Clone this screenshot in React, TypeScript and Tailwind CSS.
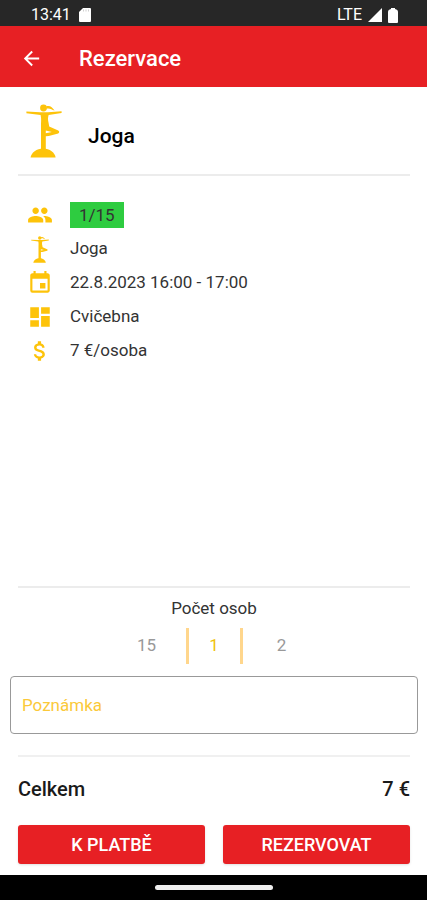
import { useState } from "react";
import type { ReactNode } from "react";
import {
  MdArrowBack,
  MdAttachMoney,
  MdDashboard,
  MdEvent,
  MdPeople,
} from "react-icons/md";

interface DetailItem {
  icon: ReactNode;
  text: string;
  highlighted?: boolean;
}

function YogaIcon({ className }: { className: string }) {
  return (
    <svg viewBox="0 0 36 54" className={className} fill="#fdc30a" aria-hidden="true">
      <circle cx="17.5" cy="4" r="3.4" />
      <path d="M20 2.4c4-1.600 6 .8 8.600 4.200-3-.8-4.600-2.600-8.200-1.800z" />
      <path d="M.4 7.400 14 8.200h8l13.600-1v1.800L22.600 11c-.8 2.600-.8 5 0 8l.6 3.400 9 4.200c1.400.8 1.300 2.300 0 3l-9.400 2.300-3 .3V46h-4.800V22c-.1-4 .6-6.500-.4-11L.4 9.200zM19.800 26.500v2.700l6-1.200z" />
      <path d="M4.600 53.600c.4-5 6.200-9.200 12.600-9.200s12 4.200 12.400 9.200z" />
    </svg>
  );
}

function SdCardIcon() {
  return (
    <svg viewBox="0 0 12 14" className="w-3 h-3.5" fill="#fff" aria-hidden="true">
      <path d="M4 0h7q1 0 1 1v12q0 1-1 1H1q-1 0-1-1V4z" />
      <path d="M4.500 1.500v2M7 1.500v2M9.500 1.500v2" stroke="#bbb" strokeWidth="0.7" />
    </svg>
  );
}

function StatusBar() {
  return (
    <div className="flex items-center justify-between h-[26px] pt-1 pl-[31px] pr-[29px] bg-[#272727] text-white text-base leading-5">
      <div className="flex items-center gap-2">
        <span>13:41</span>
        <SdCardIcon />
      </div>
      <div className="flex items-center gap-1.5">
        <span>LTE</span>
        <svg viewBox="0 0 14 14" className="w-3.5 h-3.5" fill="#fff" aria-hidden="true">
          <path d="M14 0v14H0z" />
        </svg>
        <svg viewBox="0 0 10 15" className="w-2.5 h-[15px]" fill="#fff" aria-hidden="true">
          <path d="M3 0h4v1q3 .5 3 3v10q0 1-1 1H1q-1 0-1-1V4q0-2.500 3-3z" />
        </svg>
      </div>
    </div>
  );
}

const details: DetailItem[] = [
  { icon: <MdPeople className="w-[26px] h-[26px]" />, text: "1/15", highlighted: true },
  { icon: <YogaIcon className="w-[18px] h-[27px]" />, text: "Joga" },
  { icon: <MdEvent className="w-[26px] h-[26px]" />, text: "22.8.2023 16:00 - 17:00" },
  { icon: <MdDashboard className="w-[26px] h-[26px]" />, text: "Cvičebna" },
  { icon: <MdAttachMoney className="w-[26px] h-[26px]" />, text: "7 €/osoba" },
];

const MAX_PERSONS = 15;
const PRICE = 7;

export default function App() {
  const [persons, setPersons] = useState<number>(1);
  const [note, setNote] = useState<string>("");

  // The picker wraps around at both ends
  const previous = persons === 1 ? MAX_PERSONS : persons - 1;
  const next = persons === MAX_PERSONS ? 1 : persons + 1;

  return (
    <div className="flex flex-col min-h-screen bg-white text-[#333] font-[Roboto,sans-serif]">
      <StatusBar />
      <header className="flex items-center h-[61px] px-5 pt-1 gap-9 bg-[#e72024] text-white">
        <button type="button" aria-label="Zpět">
          <MdArrowBack className="w-[23px] h-[23px]" />
        </button>
        <h1 className="text-[22px] leading-7 font-medium">Rezervace</h1>
      </header>

      <main className="flex flex-col grow">
        <div className="flex items-center gap-[26px] h-[89px] ml-[18px] mr-[17px] px-2 border-b-2 border-[#ececec]">
          <YogaIcon className="w-9 h-[54px]" />
          <h2 className="pt-2.5 text-[21px] leading-7 font-medium text-black">Joga</h2>
        </div>

        <ul className="px-[26px] pt-[22px] text-[17px]">
          {details.map((item) => (
            <li key={item.text} className="flex items-center gap-[17px] h-[34px]">
              <span className="flex justify-center w-[27px] text-[#fdc30a]">{item.icon}</span>
              {item.highlighted ? (
                <span className="px-[9px] bg-[#2ecc40] leading-[26px]">{item.text}</span>
              ) : (
                <span>{item.text}</span>
              )}
            </li>
          ))}
        </ul>

        <section className="flex flex-col items-center mt-auto ml-[18px] mr-[17px] pt-2 border-t-2 border-[#ececec] text-[17px]">
          <h3 className="leading-6">Počet osob</h3>
          <div className="flex items-center h-9 mt-2 text-[#999]">
            <button type="button" className="w-[78px] h-full" onClick={() => setPersons(previous)}>
              {previous}
            </button>
            <output className="flex items-center justify-center w-[57px] h-full border-x-3 border-[#ffd68c] text-[#f0c20c]">
              {persons}
            </output>
            <button type="button" className="w-[78px] h-full" onClick={() => setPersons(next)}>
              {next}
            </button>
          </div>
        </section>

        <div className="flex ml-2.5 mr-[9px] mt-3">
          <input
            type="text"
            aria-label="Poznámka"
            placeholder="Poznámka"
            value={note}
            onChange={(e) => setNote(e.target.value)}
            className="w-full h-[58px] px-[11px] border border-[#999] rounded text-[17px] placeholder-[#fbc93a]"
          />
        </div>

        <div className="flex justify-between ml-[18px] mr-[17px] mt-[21px] pt-[18px] border-t-2 border-[#f0f0f0] text-xl leading-7 font-medium text-[#1a1a1a]">
          <span>Celkem</span>
          <span>{persons * PRICE} €</span>
        </div>

        <div className="grid grid-cols-2 gap-[18px] ml-[18px] mr-[17px] mt-[22px] mb-[11px] text-white text-lg font-medium">
          <button type="button" className="h-[39px] rounded-[3px] bg-[#e72024] shadow">
            K PLATBĚ
          </button>
          <button type="button" className="h-[39px] rounded-[3px] bg-[#e72024] shadow">
            REZERVOVAT
          </button>
        </div>
      </main>

      <div className="flex items-center justify-center h-[25px] bg-black">
        <div className="w-[118px] h-[5px] rounded-sm bg-[#eee]" />
      </div>
    </div>
  );
}
